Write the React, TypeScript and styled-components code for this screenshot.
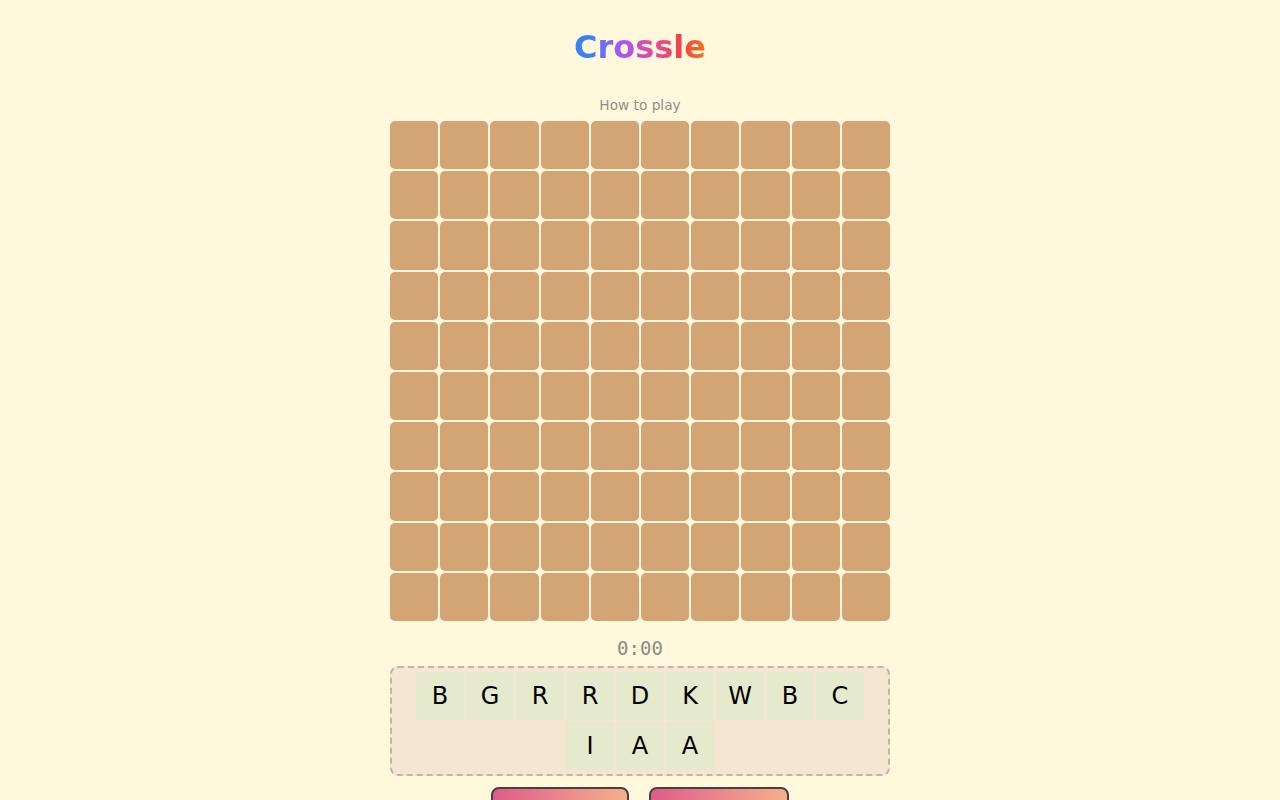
import React from 'react';
import styled, { createGlobalStyle } from 'styled-components';

const GlobalStyle = createGlobalStyle`
  html, body {
    margin: 0;
    padding: 0;
    background: #fff8dc;
    font-family: "DejaVu Sans", sans-serif;
  }
`;

const Page = styled.div`
  display: flex;
  flex-direction: column;
  align-items: center;
  padding-top: 27px;
`;

const Title = styled.h1`
  margin: 0;
  font-size: 32px;
  font-weight: 700;
  line-height: 40px;
  background: linear-gradient(90deg, #3b82f6 12%, #a855f7 35%, #ec4899 62%, #ef4444 82%, #f97316 100%);
  -webkit-background-clip: text;
  background-clip: text;
  color: transparent;
`;

const HowTo = styled.div`
  margin-top: 29px;
  font-size: 13.7px;
  color: #8f8f8f;
  line-height: 18px;
`;

const Board = styled.div`
  margin-top: 7px;
  width: 500px;
  display: grid;
  grid-template-columns: repeat(10, 1fr);
  gap: 2px;
`;

const Cell = styled.div`
  aspect-ratio: 1;
  background: #d4a574;
  border-radius: 5px;
`;

const Timer = styled.div`
  margin-top: 15px;
  font-family: "DejaVu Sans Mono", monospace;
  font-size: 19px;
  color: #8a8a8a;
  line-height: 24px;
`;

const Tray = styled.div`
  margin-top: 6px;
  width: 500px;
  box-sizing: border-box;
  padding: 4px;
  border: 2px dashed #c4b4a4;
  border-radius: 8px;
  background: #f5e6d3;
  display: flex;
  flex-wrap: wrap;
  justify-content: center;
  gap: 2px;
`;

const Tile = styled.div`
  width: 48px;
  height: 48px;
  display: flex;
  align-items: center;
  justify-content: center;
  background: #e6eacd;
  font-size: 24px;
  color: #000;
`;

const Actions = styled.div`
  margin-top: 11px;
  display: flex;
  gap: 20px;
`;

const Button = styled.button<{ $w: number }>`
  width: ${(p) => p.$w}px;
  height: 40px;
  border: 2px solid #4a4040;
  border-radius: 8px;
  background: linear-gradient(90deg, #de5c8a, #f5b08e);
  font-family: "DejaVu Sans", sans-serif;
`;

const letters = ['B', 'G', 'R', 'R', 'D', 'K', 'W', 'B', 'C', 'I', 'A', 'A'];

export default function App() {
  return (
    <Page>
      <GlobalStyle />
      <Title>Crossle</Title>
      <HowTo>How to play</HowTo>
      <Board>
        {Array.from({ length: 100 }).map((_, i) => (
          <Cell key={i} />
        ))}
      </Board>
      <Timer>0:00</Timer>
      <Tray>
        {letters.map((l, i) => (
          <Tile key={i}>{l}</Tile>
        ))}
      </Tray>
      <Actions>
        <Button $w={138} />
        <Button $w={140} />
      </Actions>
    </Page>
  );
}
